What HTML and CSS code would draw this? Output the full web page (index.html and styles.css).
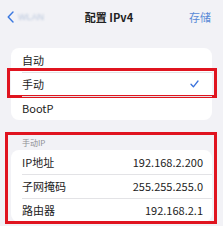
FILE: index.html
```html
<!DOCTYPE html>
<html lang="zh">
<head>
<meta charset="utf-8">
<link rel="stylesheet" href="styles.css">
</head>
<body>
<div class="nav">
  <div class="back">
    <svg class="chev" width="7" height="12" viewBox="0 0 7 12"><path d="M6 1 L1.2 6 L6 11" fill="none" stroke="#3a78e0" stroke-width="1.4" stroke-linecap="round" stroke-linejoin="round"/></svg>
    <span class="blur">WLAN</span>
  </div>
  <div class="title">配置 IPv4</div>
  <div class="save">存储</div>
</div>
<div class="main">
  <div class="card">
    <div class="row">自动</div>
    <div class="row sep hl">手动
      <svg class="check" width="9" height="8" viewBox="0 0 9 8"><path d="M1 4.2 L3.4 6.8 L8 1" fill="none" stroke="#3a72dc" stroke-width="1.3" stroke-linecap="round" stroke-linejoin="round"/></svg>
    </div>
    <div class="row sep">BootP</div>
  </div>
  <div class="section hl2">
    <div class="header">手动IP</div>
    <div class="card">
      <div class="row"><span>IP地址</span><span>192.168.2.200</span></div>
      <div class="row sep"><span>子网掩码</span><span>255.255.255.0</span></div>
      <div class="row sep"><span>路由器</span><span>192.168.2.1</span></div>
    </div>
  </div>
</div>
</body>
</html>
```

FILE: styles.css
```css
* { box-sizing: border-box; }
html, body { margin: 0; padding: 0; }
body {
  width: 223px;
  height: 226px;
  background: #f2f2f6;
  font-family: "Noto Sans CJK SC", "Liberation Sans", sans-serif;
  color: #222;
  overflow: hidden;
}
.nav {
  height: 34px;
  display: grid;
  grid-template-columns: 1fr auto 1fr;
  align-items: center;
  padding: 0 12px 0 7px;
}
.back { display: flex; align-items: center; gap: 4px; }
.blur { font-size: 9px; color: #b8c6dc; filter: blur(1px); font-family: "Liberation Sans", sans-serif; }
.title { font-size: 11px; font-weight: 600; color: #222; }
.save { justify-self: end; font-size: 11px; color: #5a8ad6; }
.main { padding: 14px 11px 0 11px; }
.card { background: #fff; border-radius: 8px; }
.row {
  position: relative;
  height: 24px;
  display: flex;
  align-items: center;
  justify-content: space-between;
  padding: 0 9px 0 11px;
  font-size: 11px;
}
.row.sep::before {
  content: "";
  position: absolute;
  left: 11px; right: 0; top: 0;
  height: 1px;
  background: #e3e3e6;
}
.hl::after {
  content: "";
  position: absolute;
  top: -4px; bottom: -2px; left: -4px; right: -5px;
  border: 3px solid #e0141f;
}
.check { margin-right: 4px; }
.section { position: relative; margin-top: 14px; }
.hl2::after {
  content: "";
  position: absolute;
  top: -2px; bottom: -2px; left: -6px; right: -5px;
  border: 3px solid #e0141f;
  pointer-events: none;
}
.header {
  height: 16px;
  padding: 3px 0 0 11px;
  font-size: 8px;
  color: #8e8e93;
}
```
